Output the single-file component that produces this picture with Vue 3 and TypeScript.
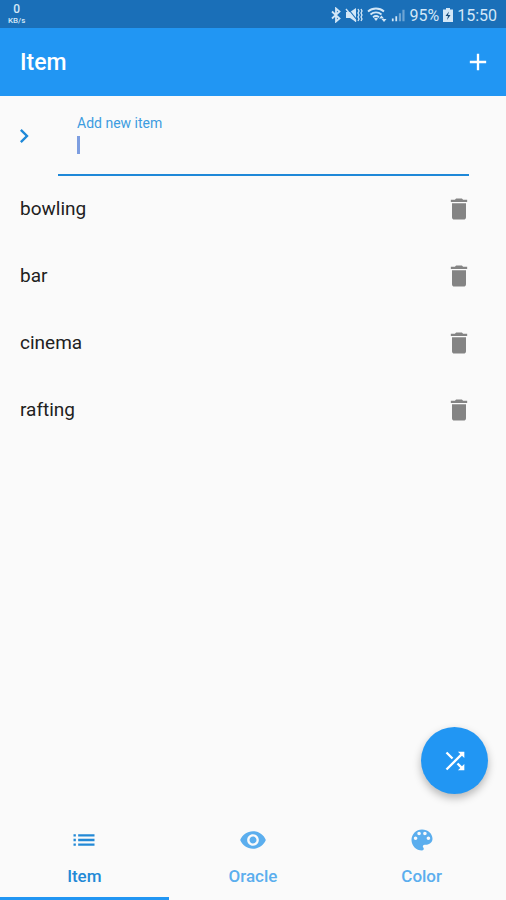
<script setup lang="ts">
import { ref } from 'vue'

interface Tab {
  name: string
  icon: string
}

const items = ref<string[]>(['bowling', 'bar', 'cinema', 'rafting'])
const draft = ref('')
const activeTab = ref('Item')
const field = ref<HTMLInputElement | null>(null)

const tabs: Tab[] = [
  { name: 'Item', icon: 'M3 13h2v-2H3v2zm0 4h2v-2H3v2zm0-8h2V7H3v2zm4 4h14v-2H7v2zm0 4h14v-2H7v2zM7 7v2h14V7H7z' },
  { name: 'Oracle', icon: 'M12 4.5C7 4.5 2.73 7.61 1 12c1.73 4.39 6 7.5 11 7.5s9.27-3.11 11-7.5c-1.73-4.39-6-7.5-11-7.5zM12 17c-2.76 0-5-2.24-5-5s2.24-5 5-5 5 2.24 5 5-2.24 5-5 5zm0-8c-1.66 0-3 1.34-3 3s1.34 3 3 3 3-1.34 3-3-1.34-3-3-3z' },
  { name: 'Color', icon: 'M12 3c-4.97 0-9 4.03-9 9s4.03 9 9 9c.83 0 1.5-.67 1.5-1.5 0-.39-.15-.74-.39-1.01-.23-.26-.38-.61-.38-.99 0-.83.67-1.5 1.5-1.5H16c2.76 0 5-2.24 5-5 0-4.42-4.03-8-9-8zm-5.5 9c-.83 0-1.5-.67-1.5-1.5S5.67 9 6.5 9 8 9.67 8 10.5 7.33 12 6.5 12zm3-4C8.67 8 8 7.33 8 6.5S8.67 5 9.5 5s1.5.67 1.5 1.5S10.33 8 9.5 8zm5 0c-.83 0-1.5-.67-1.5-1.5S13.67 5 14.5 5s1.5.67 1.5 1.5S15.33 8 14.5 8zm3 4c-.83 0-1.5-.67-1.5-1.5S16.67 9 17.5 9s1.5.67 1.5 1.5-.67 1.5-1.5 1.5z' },
]

function addItem() {
  const text = draft.value.trim()
  if (text) items.value.push(text)
  draft.value = ''
}

function removeItem(index: number) {
  items.value.splice(index, 1)
}

function shuffle() {
  for (let i = items.value.length - 1; i > 0; i--) {
    const j = Math.floor(Math.random() * (i + 1))
    const held = items.value[i]
    items.value[i] = items.value[j]
    items.value[j] = held
  }
}
</script>

<template>
  <div class="screen">
    <div class="status">
      <div class="speed"><span class="speed-value">0</span><span class="speed-unit">KB/s</span></div>
      <div class="indicators">
        <svg class="bluetooth" viewBox="0 0 10 16" aria-hidden="true">
          <path d="M1 4.5 8.5 11.5 5 14.5V1.5L8.5 4.5 1 11.5" fill="none" stroke="currentColor" stroke-width="1.8" />
        </svg>
        <svg class="muted" viewBox="0 0 18 16" aria-hidden="true">
          <path d="M1 5h4l6-4v14l-6-4H1z" fill="currentColor" />
          <path d="M2.5 1 12 13" stroke="#1a6fb8" stroke-width="1.2" />
          <path d="M1 2 11 14.5" stroke="currentColor" stroke-width="1.4" />
          <path d="M13 2l1 2-1 2 1 2-1 2 1 2-1 2M16 2l1 2-1 2 1 2-1 2 1 2-1 2" fill="none" stroke="currentColor" stroke-width="1.3" />
        </svg>
        <svg class="wifi" viewBox="0 0 20 16" aria-hidden="true">
          <path d="M1 4.5c4.500-4 11.500-4 16 0M3.500 7.500c3.200-2.800 7.800-2.800 11 0M6 10.200c2-1.600 4-1.600 6 0" fill="none" stroke="currentColor" stroke-width="1.8" />
          <path d="M7 11.500q2-1.500 4 0L9 14z" fill="currentColor" />
          <path d="M12 11.500l2.500-3 2.500 3zM14.500 12h5L17 15z" fill="currentColor" />
        </svg>
        <svg class="signal" viewBox="0 0 16 16" aria-hidden="true">
          <path d="M1 12h2v3H1zM5 9.500h2V15H5z" fill="currentColor" />
          <path d="M9 6h2.500v9H9zM13 2h2.500v13H13z" fill="currentColor" opacity="0.45" />
        </svg>
        <span>95%</span>
        <svg class="battery" viewBox="0 0 10 14" aria-hidden="true">
          <path d="M3 0h4v1.500h3V14H0V1.500h3z" fill="currentColor" />
          <path d="M6 3.500 2.500 8H5l-1 4 3.500-5H5z" fill="#174b79" />
        </svg>
        <span>15:50</span>
      </div>
    </div>

    <header class="appbar">
      <h1>Item</h1>
      <button type="button" class="icon-button" aria-label="Add" @click="field?.focus()">
        <svg class="icon" viewBox="0 0 24 24"><path d="M19 13h-6v6h-2v-6H5v-2h6V5h2v6h6v2z" /></svg>
      </button>
    </header>

    <main>
      <form class="entry" @submit.prevent="addItem">
        <button type="submit" class="icon-button submit" aria-label="Save item">
          <svg class="icon" viewBox="0 0 24 24"><path d="M10 6 8.590 7.410 13.170 12l-4.580 4.590L10 18l6-6z" /></svg>
        </button>
        <div class="field">
          <label for="new-item">Add new item</label>
          <div class="line">
            <span class="caret" aria-hidden="true"></span>
            <input id="new-item" ref="field" v-model="draft" type="text" autocomplete="off" />
          </div>
        </div>
      </form>

      <ul class="items">
        <li v-for="(item, index) in items" :key="item">
          <span>{{ item }}</span>
          <button type="button" class="icon-button trash" :aria-label="`Delete ${item}`" @click="removeItem(index)">
            <svg class="icon" viewBox="0 0 24 24"><path d="M6 19c0 1.100.9 2 2 2h8c1.100 0 2-.9 2-2V7H6v12zM19 4h-3.500l-1-1h-5l-1 1H5v2h14V4z" /></svg>
          </button>
        </li>
      </ul>
    </main>

    <button type="button" class="fab" aria-label="Shuffle" @click="shuffle">
      <svg class="icon" viewBox="0 0 24 24"><path d="M10.590 9.170 5.410 4 4 5.410l5.170 5.170 1.420-1.410zM14.500 4l2.040 2.040L4 18.590 5.410 20 17.960 7.460 20 9.500V4h-5.500zm.33 9.410-1.410 1.410 3.130 3.130L14.500 20H20v-5.500l-2.040 2.040-3.130-3.130z" /></svg>
    </button>

    <nav class="tabs">
      <button
        v-for="tab in tabs"
        :key="tab.name"
        type="button"
        class="tab"
        :class="{ active: tab.name === activeTab }"
        @click="activeTab = tab.name"
      >
        <svg class="icon" viewBox="0 0 24 24" aria-hidden="true"><path :d="tab.icon" /></svg>
        <span>{{ tab.name }}</span>
      </button>
    </nav>
  </div>
</template>

<style>
body {
  background: #fafafa;
}
</style>

<style scoped>
.screen {
  display: flex;
  flex-direction: column;
  min-height: 100vh;
  background: #fafafa;
  color: #212121;
  font-family: Roboto, "Liberation Sans", sans-serif;
}

button {
  padding: 0;
  border: 0;
  background: none;
  color: inherit;
  font: inherit;
  cursor: pointer;
}

.icon {
  display: block;
  width: 28px;
  height: 28px;
  fill: currentColor;
}

.icon-button {
  flex: none;
}

.status {
  display: flex;
  align-items: center;
  justify-content: space-between;
  height: 28px;
  padding: 0 9px 0 8px;
  background: #1a6fb8;
  color: #d3e7f7;
  font-size: 16px;
}

.speed {
  display: flex;
  flex-direction: column;
  align-items: center;
  font-weight: 500;
}

.speed-value {
  font-size: 12px;
  line-height: 14px;
}

.speed-unit {
  font-size: 8px;
  line-height: 10px;
}

.indicators {
  display: flex;
  align-items: center;
  gap: 4px;
  padding-top: 2px;
}

.bluetooth {
  width: 10px;
  height: 16px;
}

.muted {
  width: 18px;
  height: 16px;
}

.wifi {
  width: 20px;
  height: 16px;
}

.signal {
  width: 14px;
  height: 16px;
}

.battery {
  width: 10px;
  height: 14px;
}

.appbar {
  display: flex;
  align-items: center;
  justify-content: space-between;
  height: 68px;
  padding: 0 14px 0 20px;
  background: #2196f3;
  color: #fff;
}

h1 {
  margin: 0;
  font-size: 23px;
  font-weight: 500;
}

main {
  flex: 1;
}

.entry {
  display: flex;
  align-items: center;
  gap: 20px;
  height: 80px;
  padding: 0 37px 0 10px;
}

.submit {
  color: #1e88d8;
}

.field {
  display: flex;
  flex: 1;
  flex-direction: column;
  align-self: stretch;
  box-sizing: border-box;
  padding: 19px 19px 0;
  border-bottom: 2px solid #1e88d8;
}

label {
  color: #3d9ce0;
  font-size: 14px;
  line-height: 17px;
}

.line {
  display: flex;
  align-items: center;
  height: 26px;
}

.caret {
  width: 3px;
  height: 18px;
  background: #7d9ee0;
}

input {
  flex: 1;
  min-width: 0;
  padding: 0;
  border: 0;
  outline: 0;
  background: none;
  color: inherit;
  font: inherit;
  font-size: 19px;
}

.items {
  display: flex;
  flex-direction: column;
  gap: 2px;
  margin: 0;
  padding: 0 33px 0 20px;
  list-style: none;
  font-size: 19px;
}

li {
  display: flex;
  align-items: center;
  justify-content: space-between;
  height: 65px;
}

.trash {
  color: #848484;
}

.fab {
  position: fixed;
  right: 18px;
  bottom: 106px;
  display: grid;
  place-items: center;
  width: 67px;
  height: 67px;
  border-radius: 50%;
  background: #2196f3;
  color: #fff;
  box-shadow: 0 4px 8px rgba(0, 0, 0, 0.28);
}

.tabs {
  display: grid;
  grid-template-columns: repeat(3, 1fr);
  height: 86px;
}

.tab {
  display: flex;
  flex-direction: column;
  align-items: center;
  gap: 12px;
  padding-top: 12px;
  border-bottom: 3px solid transparent;
  color: #5baeee;
  font-size: 17px;
  font-weight: 500;
  line-height: 20px;
}

.tab.active {
  border-bottom-color: #2196f3;
  color: #2389d6;
}
</style>
